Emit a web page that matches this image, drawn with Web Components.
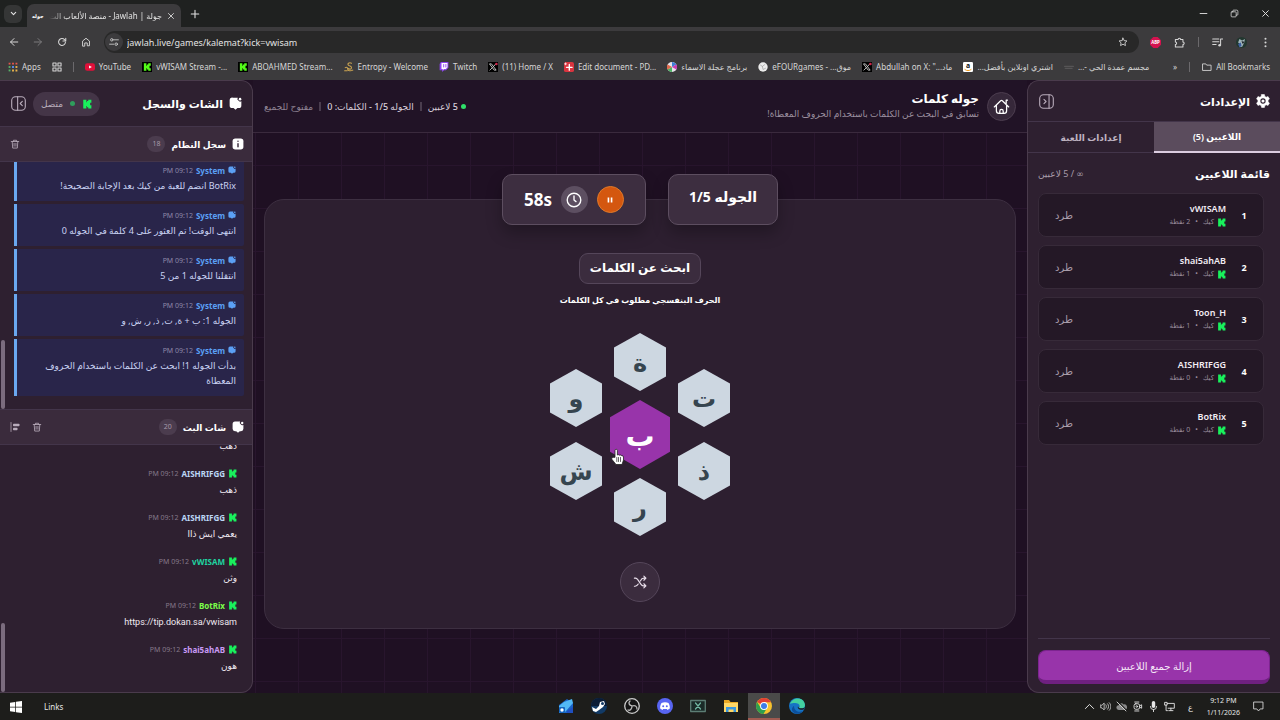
<!DOCTYPE html>
<html lang="ar">
<head>
<meta charset="utf-8">
<title>جولة | Jawlah - منصة الألعاب</title>
<style>
  html, body { height: 100%; margin: 0; }
  body { font-family: "Noto Sans", "DejaVu Sans", sans-serif; font-size: 10px; background: #1f1023; color: #fff; overflow: hidden; }
</style>
</head>
<body>
<desktop-view></desktop-view>
<script>
const ICONS = {
  kick: ['16', '<path fill="#19f05c" d="M2 1h5v4h1V3h2V1h5v5h-2v2l0 0v2h2v5h-5v-2H8v-2H7v4H2z"/>'],
  kickbox: ['16', '<path fill="#000" d="M0 0h16v16H0z"/><path fill="#53fc18" d="M3 2h4v4h1V4h2V2h4v4h-2v2l0 0v2h2v4h-4v-2H8v-2H7v4H3z"/>'],
  chevdown: ['16', '<path d="M3 5.500l5 5 5-5" stroke-width="2.600"/>'],
  close: ['16', '<path d="M3 3l10 10M13 3L3 13" stroke-width="1.7"/>'],
  plus: ['16', '<path d="M8 2v12M2 8h12" stroke-width="1.7"/>'],
  min: ['16', '<path d="M2 8h12" stroke-width="1.6"/>'],
  restore: ['16', '<rect x="2" y="5" width="9" height="9" rx="1.5"/><path d="M5 5V3.500A1.500 1.500 0 0 1 6.500 2H12a2 2 0 0 1 2 2v5.500A1.500 1.500 0 0 1 12.500 11H11"/>'],
  back: ['16', '<path d="M14 8H2.500M8 2.500L2.500 8 8 13.500" stroke-width="1.6"/>'],
  fwd: ['16', '<path d="M2 8h11.500M8 2.500L13.500 8 8 13.500" stroke-width="1.6"/>'],
  reload: ['16', '<path d="M13.500 8.500A5.500 5.500 0 1 1 12 4.200L13.500 6" stroke-width="1.700"/><path d="M14 2v4.500H9.500" stroke-width="1.700"/>'],
  home: ['16', '<path d="M2.500 14V6.500L8 2l5.500 4.500V14H10V9.500H6V14z" stroke-width="1.500"/>'],
  tune: ['16', '<circle cx="4.500" cy="4.500" r="2"/><path d="M8.500 4.500H15M1 11.500h6.500"/><circle cx="11.500" cy="11.500" r="2"/>'],
  star: ['16', '<path d="M8 1.800l1.900 4 4.400.5-3.200 3 .8 4.400L8 11.500l-3.900 2.200.8-4.400-3.200-3 4.400-.5z" stroke-width="1.400"/>'],
  abp: ['20', '<path fill="#d3124f" d="M6 0h8l6 6v8l-6 6H6l-6-6V6z"/><text x="10" y="13" font-size="8" font-weight="700" fill="#fff" text-anchor="middle" font-family="Noto Sans">ABP</text>'],
  puzzle: ['16', '<path d="M2 3.500h4a1.800 1.800 0 0 1 3.600 0H13v3.800a1.800 1.800 0 0 1 0 3.600v3.600H2V11a1.800 1.800 0 0 0 0-3.600z" stroke-width="1.500"/>'],
  music: ['16', '<path d="M1 3h9M1 7h9M1 11h5" stroke-width="1.500"/><path d="M12.500 12V3H16" stroke-width="1.500"/><circle cx="11" cy="12" r="1.800" fill="currentColor" stroke="none"/>'],
  avatar: ['16', '<circle cx="8" cy="8" r="8" fill="#22372f"/><path fill="#9fb3b8" d="M5 3l4 2 4-2-1 5-3 6-4 1 1-5-3-2z"/><path fill="#3c5fa0" d="M3 10l4-2 1 5-3 2z"/><path fill="#10151a" d="M8 6l4 1-2 3z"/>'],
  dots: ['16', '<g fill="currentColor" stroke="none"><circle cx="8" cy="2.500" r="1.500"/><circle cx="8" cy="8" r="1.500"/><circle cx="8" cy="13.500" r="1.500"/></g>'],
  apps: ['16', '<g stroke="none"><path fill="#e8564a" d="M1 1h3v3H1zM6.500 1h3v3h-3zM12 1h3v3h-3z"/><path fill="#58b368" d="M1 6.500h3v3H1z"/><path fill="#5b8def" d="M6.500 6.500h3v3h-3z"/><path fill="#e9b44c" d="M12 6.500h3v3h-3z"/><path fill="#58b368" d="M1 12h3v3H1z"/><path fill="#e9b44c" d="M6.500 12h3v3h-3zM12 12h3v3h-3z"/></g>'],
  grid: ['16', '<path d="M1.500 1.500h5v5h-5zM9.500 1.500h5v5h-5zM1.500 9.500h5v5h-5zM9.500 9.500h5v5h-5z" stroke-width="1.700"/>'],
  youtube: ['16', '<rect y="2" width="16" height="12" rx="3.500" fill="#e0103a"/><path fill="#fff" d="M6.500 5.500L11 8l-4.500 2.500z"/>'],
  entropy: ['16', '<path stroke="#c9a352" stroke-width="1.700" d="M12 2C8 0 5 3 7 5s5 1 5 4-4 3-6 1M2 9c3-2 4 1 4 3s5 3 8 1M1 14h4"/>'],
  twitch: ['16', '<path fill="#8d44f0" d="M3 0L1 3v10h4v3l3-3h3l4-4V0z"/><path fill="#fff" d="M4 1.500h9.500v7L11 11H8l-2 2v-2H4z"/><path stroke="#8d44f0" stroke-width="1.500" d="M7.500 4v4M11 4v4"/>'],
  x: ['16', '<path fill="#000" d="M0 0h16v16H0z"/><path stroke="#ddd" stroke-width="1.300" d="M3 3h2.500l7.500 10h-2.500zM12.500 3L9 7M7 9l-4 4"/><circle cx="13.500" cy="3" r="2" fill="#d0244a"/>'],
  pdf: ['16', '<rect width="16" height="16" rx="3" fill="#d9343f"/><path stroke="#fff" stroke-width="2.200" d="M8.500 4v9M4 8.500h9"/><path stroke="#fff" stroke-width="1.200" d="M2.500 1.500v3M1 3h3"/>'],
  wheel: ['16', '<circle cx="8" cy="8" r="8" fill="#e7e3ea"/><path fill="#3f7fd6" d="M8 8V0a8 8 0 0 1 7 4z"/><path fill="#c63cb4" d="M8 8l7-4a8 8 0 0 1 0 8z"/><path fill="#4bb562" d="M8 8v8a8 8 0 0 1-7-4z"/><path fill="#e06a4c" d="M8 8L1 12a8 8 0 0 1 0-8z"/>'],
  globe: ['16', '<circle cx="8" cy="8" r="7.500" fill="#ececec"/><path stroke="#999" stroke-width="1" d="M4 5l3 2 4-3M7 7l1 5 4-2"/>'],
  amazon: ['16', '<rect width="16" height="16" rx="2" fill="#fff"/><text x="8" y="10" font-size="11" font-weight="700" fill="#111" text-anchor="middle" font-family="Noto Sans">a</text><path stroke="#f09a1a" stroke-width="1.500" d="M3 12c3 2.500 7 2.500 10 0"/>'],
  faint: ['16', '<path stroke="#565456" stroke-width="2" d="M1 7h14M2 10h11"/>'],
  folder: ['16', '<path d="M1.500 3h4.500l1.500 2h7v8.500h-13z" stroke-width="1.400"/>'],
  panelL: ['20', '<rect x="2" y="2" width="16" height="16" rx="4.500"/><path d="M9 2v16M14.500 7.500L12 10l2.500 2.500"/>'],
  panelR: ['20', '<rect x="2" y="2" width="16" height="16" rx="4.500"/><path d="M13 2v16M7 7.500L9.500 10 7 12.500"/>'],
  bubble: ['20', '<path fill="currentColor" stroke="none" d="M6 1h7.500a3.200 3.200 0 0 0 1 4.500 3.200 3.200 0 0 0 4.500 1V13a4 4 0 0 1-4 4h-2l-3 2.500L7 17H5a4 4 0 0 1-4-4V5.500A4.500 4.500 0 0 1 6 1z"/><circle cx="17" cy="3.300" r="2" fill="currentColor" stroke="none"/>'],
  info: ['20', '<rect x="1" y="1" width="18" height="18" rx="4.500" fill="currentColor" stroke="none"/><path stroke="#3a2b3c" stroke-width="2.400" d="M10 9.500v5M10 5.300v.2"/>'],
  trash: ['16', '<path d="M2 4h12M5.500 4V2h5v2M3.500 4l.8 10.500h7.400L12.500 4M6.500 7v4.500M9.500 7v4.500"/>'],
  align: ['20', '<path d="M2 1v18" stroke-width="1.500"/><rect x="6" y="3.500" width="13" height="5" rx="1.500" fill="currentColor" stroke="none"/><rect x="6" y="11.500" width="9" height="5" rx="1.500" fill="currentColor" stroke="none"/>'],
  gear: ['20', '<path fill="currentColor" stroke="currentColor" stroke-width=".8" d="M8 .8h4l.7 2.700 1.800 1 2.700-.8 2 3.400-2 1.900v2l2 1.900-2 3.400-2.700-.8-1.800 1-.7 2.700H8l-.7-2.700-1.800-1-2.700.8-2-3.400 2-1.900V9L.8 7.100l2-3.400 2.700.8 1.800-1z"/><circle cx="10" cy="10" r="3" stroke="#2e2030" stroke-width="1.600"/>'],
  house: ['20', '<path d="M1.500 10.500L9 3.200a1.500 1.500 0 0 1 2 0l7.500 7.300M4 8.500V15a3 3 0 0 0 3 3h6a3 3 0 0 0 3-3V8.500M15.500 6.500V2.500H17M8 18v-2.500a2 2 0 0 1 4 0V18" stroke-width="1.500"/>'],
  clock: ['20', '<circle cx="10" cy="10" r="8.500" stroke-width="1.700"/><path d="M10 5v5l2.500 2" stroke-width="1.700"/>'],
  pause: ['16', '<path d="M5.500 4v8M10.500 4v8" stroke-width="2.600" stroke-linecap="butt"/>'],
  shuffle: ['20', '<path d="M2 4.500h1.500c5 0 6 11 11.500 11h3M2 16h1c2 0 3.500-1.200 4.500-3M10.500 8.500c1-2 2.500-4 5-4H18M15.500 1.500l3 3-3 3M15.500 12.500l3 3-3 3" stroke-width="1.600"/>'],
  win: ['16', '<path fill="#fff" d="M0 2.200l7-1v6.300H0zM8 1l8-1v7.500H8zM0 8.500h7v6.300l-7-1zM8 8.500h8V16l-8-1z"/>'],
  mailbox: ['16', '<path fill="#1a63c9" d="M1 7l8-6 6 4v10H1z"/><path fill="#52b8f5" d="M1 8l5-4 8-3 1 4-7 8-2 2H1z"/><path fill="#1f4fc0" d="M9 13l6-4v6H9z"/><rect x="1" y="9" width="6" height="6" rx="1" fill="#1565c0"/><circle cx="4" cy="12" r="1.700" fill="#fff"/>'],
  steam: ['16', '<circle cx="8" cy="8" r="8" fill="#123a66"/><path fill="#0a1c36" d="M0 8a8 8 0 0 1 16 0z"/><path fill="#fff" d="M1 9l4 2 3-3 1-4 4-1 1 3-2 3-4 3-3 2-3-1z"/><circle cx="11.500" cy="5.500" r="1.500" fill="#123a66"/>'],
  obs: ['16', '<circle cx="8" cy="8" r="7.300" stroke="#ccc" fill="#151515"/><path stroke="#bbb" d="M8 8c-3-1-4-3-2-5M8 8c3-1 5 0 5 3M8 8c0 3-2 5-4 4" stroke-width="1.300"/>'],
  discord: ['16', '<circle cx="8" cy="8" r="8" fill="#5865f2"/><path fill="#fff" d="M4.500 5c2-1 5-1 7 0 1.200 2 1.500 4 1.300 5.500L10.500 12l-.7-1H6.200l-.7 1-2.300-1.500C3 9 3.300 7 4.500 5z"/><circle cx="6.200" cy="8.200" r="1" fill="#5865f2"/><circle cx="9.800" cy="8.200" r="1" fill="#5865f2"/>'],
  xbox: ['16', '<rect x=".7" y="2.500" width="14.600" height="11" stroke="#5c7d74" fill="#1a2a27"/><path stroke="#72b8a3" stroke-width="1.200" d="M5.500 5l5 6M10.500 5l-5 6"/>'],
  explorer: ['16', '<path fill="#e9a825" d="M1 2h5l1.500 2H15v3H1z"/><path fill="#ffd766" d="M1 5h14v9H1z"/><path fill="#3b98dd" d="M3 9h10v5h-2.500v-2.500h-5V14H3z"/>'],
  chrome: ['16', '<circle cx="8" cy="8" r="8" fill="#f7c32e"/><path fill="#e24034" d="M8 8L1.100 4A8 8 0 0 1 15 4.200H8z"/><path fill="#2da04f" d="M1.100 4A8 8 0 0 0 7.500 16L11 10 8 8 4.500 9.500z"/><circle cx="8" cy="8" r="3.900" fill="#fff"/><circle cx="8" cy="8" r="3" fill="#3f7de8"/>'],
  edge: ['16', '<circle cx="8" cy="8" r="8" fill="#1673c4"/><path fill="#43d0a0" d="M1 6c2-7 14-8 15 1 0 3-3 4-6 3 2-3-1-5-4-5-2 0-4 0-5 1z"/><path fill="#0c4f9c" d="M5 8c0 5 5 7 9 5-2 3-7 4-10 1-2-2-1-5 1-6z"/><path fill="#1d1d1b" d="M9 8.500c-1 2 2 4 5.500 3l1.500-2c-2 1-5 1-6 .5z"/>'],
  caret: ['16', '<path d="M2 11l6-6 6 6" stroke-width="1.400"/>'],
  volume: ['16', '<path d="M1 6v4h2l3 3V3L3 6zM8.500 5.500c1 1.500 1 3.500 0 5M11 4c2 2 2 6 0 8M13.500 2.500c3 3 3 8 0 11" stroke-width="1.100"/>'],
  nocloud: ['16', '<g><path fill="#8a8a8a" stroke="none" d="M4 13a3.500 3.500 0 0 1 0-7 4 4 0 0 1 7-1 3.500 3.500 0 0 1 2 8z"/><path stroke="#1d1d1b" d="M3 1l13 13" stroke-width="1.500"/><path stroke="#ddd" d="M1.500 1.500l13 13" stroke-width="1.300"/></g>'],
  cam: ['16', '<rect x="3" y="4" width="8" height="8" rx="2.500"/><path d="M11 7l3-1.500v5L11 9M4 1.500h6M4 14.500h6"/><circle cx="7" cy="8" r="1.200"/>'],
  mic: ['16', '<rect x="5.500" y="0" width="5" height="10" rx="2.500" fill="currentColor" stroke="none"/><path d="M3.500 8a4.500 4.500 0 0 0 9 0M8 12.500V16"/>'],
  net: ['16', '<path d="M5 3.500h10v7H6M10 10.500v3M7 14h6M1.500 2h3v4h-3zM3 6v8h2"/>'],
  note: ['16', '<path d="M1.500 1.500h13v10h-4L8 14.500l-2.500-3h-4z" stroke-width="1.200"/>'],
  hand: ['16', '<path fill="#fff" stroke="#222" stroke-width=".8" d="M5 8V1.500a1.200 1.200 0 0 1 2.400 0V6l1-.3 1.200.5 1.200-.2 1 .7 1.200.2.500 1V11l-1.500 4.500H6L2 10.500l-.5-1.500 1.500-.5z"/><path stroke="#222" stroke-width=".7" d="M8.500 8.500v4M10.500 8.500v4M6.800 8.500v4"/>']
};

const define = (name, css, render) => customElements.define(name, class extends HTMLElement {
  connectedCallback() {
    if (this.shadowRoot) return;
    const t = document.createElement('template');
    t.innerHTML = `<style>*,*::before,*::after{box-sizing:border-box}button,input{font:inherit;color:inherit;background:none;border:0;margin:0;padding:0}a{color:inherit;text-decoration:none}h1,h2,p{margin:0;font-weight:inherit}${css}</style>${render(this)}`;
    this.attachShadow({ mode: 'open' }).append(t.content.cloneNode(true));
  }
});
const at = (el, n) => el.getAttribute(n) || '';

define('ui-icon', `:host{display:inline-flex;flex:none;width:10px;height:10px}svg{width:100%;height:100%;display:block}`, el => {
  const [box, body] = ICONS[at(el, 'name')];
  return `<svg viewBox="0 0 ${box} ${box}" fill="none" stroke-width="1.300" stroke-linecap="round" stroke-linejoin="round" aria-hidden="true"><g stroke="${/fill="#/.test(body) && !/currentColor/.test(body) ? 'none' : 'currentColor'}">${body}</g></svg>`;
});

/* ---------- browser chrome ---------- */
define('tab-strip', `
  :host{display:flex;align-items:center;height:27px;background:#1f2120;color:#e3e3e3;padding:0 10px 0 4px}
  .search{width:18px;height:18px;border-radius:6px;background:#353636;display:grid;place-items:center}
  .search ui-icon{width:7px;height:7px}
  .tab{display:flex;align-items:center;gap:5px;align-self:flex-end;height:23px;width:154px;margin-left:5px;padding:0 6px 0 5px;background:#3c3b3d;border-radius:7px 7px 0 0}
  .fav{font-size:5px;font-weight:700;width:12px;color:#fff}
  .title{flex:1;font-size:8px;direction:rtl;white-space:nowrap;overflow:hidden;mask-image:linear-gradient(to right,transparent,#000 16px);-webkit-mask-image:linear-gradient(to right,transparent,#000 16px)}
  .tab button{display:flex}.tab ui-icon{width:8px;height:8px}
  .new{margin-left:9px;display:flex}
  .win{margin-left:auto;display:flex;gap:22px}
  .win button{display:flex}.win ui-icon{width:9px;height:9px}`,
  () => `<button class="search" aria-label="Search tabs"><ui-icon name="chevdown"></ui-icon></button>
  <div class="tab"><span class="fav">جوله</span><span class="title">جولة | Jawlah - منصة الألعاب الت</span><button aria-label="Close"><ui-icon name="close"></ui-icon></button></div>
  <button class="new" aria-label="New tab"><ui-icon name="plus"></ui-icon></button>
  <div class="win"><button aria-label="Minimize"><ui-icon name="min"></ui-icon></button><button aria-label="Restore"><ui-icon name="restore"></ui-icon></button><button aria-label="Close window"><ui-icon name="close"></ui-icon></button></div>`);

define('tool-bar', `
  :host{display:flex;align-items:center;height:30px;background:#3c3b3d;color:#d6d6d6;padding:0 9px}
  button{display:flex}
  .nav{display:flex;gap:14px;margin-right:13px}.nav .off{color:#7b7a7c}
  .url{flex:1;display:flex;align-items:center;gap:4px;height:22px;border-radius:11px;background:#282828;padding:0 11px 0 1px}
  .site{width:18px;height:18px;border-radius:9px;background:#3c3b3d;display:grid;place-items:center}
  input{flex:1;font-size:9px;color:#e3e3e3;outline:0}
  .ext{display:flex;align-items:center;gap:13px;margin-left:11px}
  .ext ui-icon{width:11px;height:11px}
  i{width:1px;height:10px;background:#6b696c}`,
  () => `<div class="nav"><button aria-label="Back"><ui-icon name="back"></ui-icon></button><button class="off" aria-label="Forward"><ui-icon name="fwd"></ui-icon></button><button aria-label="Reload"><ui-icon name="reload"></ui-icon></button><button aria-label="Home"><ui-icon name="home"></ui-icon></button></div>
  <div class="url"><span class="site"><ui-icon name="tune"></ui-icon></span><input aria-label="Address" value="jawlah.live/games/kalemat?kick=vwisam"><button aria-label="Bookmark"><ui-icon name="star"></ui-icon></button></div>
  <div class="ext"><button aria-label="Adblock"><ui-icon name="abp"></ui-icon></button><button aria-label="Extensions"><ui-icon name="puzzle"></ui-icon></button><i></i><button aria-label="Media"><ui-icon name="music"></ui-icon></button><button aria-label="Profile"><ui-icon name="avatar"></ui-icon></button><button aria-label="Menu"><ui-icon name="dots"></ui-icon></button></div>`);

define('book-mark', `:host{display:block;flex:none}a{display:flex;align-items:center;gap:4px;white-space:nowrap}`,
  el => `<a href="#"><ui-icon name="${at(el, 'icon')}"></ui-icon><span dir="${at(el, 'dir') || 'ltr'}"><slot></slot></span></a>`);

define('bookmarks-bar', `
  :host{display:flex;align-items:center;gap:11px;height:23px;background:#3c3b3d;color:#d6d6d6;font-size:8px;padding:0 10px 4px 8px}
  i{width:1px;height:10px;background:#6b696c}
  .end{margin-left:auto;display:flex;align-items:center;gap:12px}`,
  () => `<book-mark icon="apps">Apps</book-mark><ui-icon name="grid"></ui-icon><i></i>
  <book-mark icon="youtube">YouTube</book-mark><book-mark icon="kickbox">vWISAM Stream -...</book-mark><book-mark icon="kickbox">ABOAHMED Stream...</book-mark>
  <book-mark icon="entropy">Entropy - Welcome</book-mark><book-mark icon="twitch">Twitch</book-mark><book-mark icon="x">(11) Home / X</book-mark><book-mark icon="pdf">Edit document - PD...</book-mark>
  <book-mark icon="wheel">برنامج عجلة الاسماء</book-mark><book-mark icon="globe">eFOURgames - موق...&rlm;</book-mark><book-mark icon="x">Abdullah on X: "ماد...&rlm;</book-mark>
  <book-mark icon="amazon">...اشتري اونلاين بأفضل</book-mark><book-mark icon="faint">...- مجسم عمدة الحي</book-mark>
  <div class="end"><span>»</span><i></i><book-mark icon="folder">All Bookmarks</book-mark></div>`);

/* ---------- settings panel ---------- */
define('player-row', `
  :host{display:flex;align-items:center;height:44px;border:1px solid #372a39;border-radius:8px;background:#241826;padding:0 14px}
  b{width:10px;text-align:center;font-size:9px}
  .who{flex:1;margin-right:13px;display:grid;row-gap:1px}
  .name{font-size:9px;line-height:13px;font-weight:600;color:#f3edf4}
  .meta{display:flex;align-items:center;gap:3px;font-size:7px;line-height:12px;color:#9a8d9c}
  .meta ui-icon{width:9px;height:9px}
  button{font-size:10px;color:#a99dab;padding:0 2px}`,
  el => `<b>${at(el, 'rank')}</b><div class="who"><span class="name">${at(el, 'name')}</span><span class="meta"><ui-icon name="kick"></ui-icon><span>كيك</span><span>&nbsp;•&nbsp;</span><span>${at(el, 'points')} نقطة</span></span></div><button>طرد</button>`);

define('settings-panel', `
  :host{display:flex;flex-direction:column;background:#2e2030;border:1px solid #4a3b4c;border-right:0;border-radius:12px 0 0 12px;overflow:hidden}
  header{display:flex;align-items:center;gap:6px;height:41px;padding:0 10px;border-bottom:1px solid #43354a}
  header ui-icon{width:14px;height:14px}
  header h2{font-size:11px;font-weight:700;flex:1}
  header button{display:flex;color:#b9acbb}header button ui-icon{width:17px;height:17px}
  nav{display:grid;grid-template-columns:1fr 1fr;height:31px;border-bottom:1px solid #43354a}
  nav button{font-size:9px;font-weight:600;color:#bfb3c1}
  nav .on{background:#5b4c5d;color:#fff;border-bottom:2px solid #dccde0;margin-bottom:-1px}
  .cap{display:flex;justify-content:space-between;align-items:center;height:40px;padding:0 10px}
  .cap h2{font-size:11px;font-weight:700}.cap span{font-size:9px;color:#a99dab}
  .list{flex:1;min-height:0;overflow:hidden;display:flex;flex-direction:column;gap:8px;padding:0 16px 0 10px}
  player-row{flex:none}
  footer{margin:0 10px;border-top:1px solid #43354a;padding:11px 0 8px}
  footer button{display:block;width:100%;height:34px;border-radius:8px;background:#9834aa;border:1px solid #7d2490;border-bottom:4px solid #6f2080;font-size:10px;font-weight:500;color:#f6e8f8}`,
  () => `<header><ui-icon name="gear"></ui-icon><h2>الإعدادات</h2><button aria-label="طي"><ui-icon name="panelR"></ui-icon></button></header>
  <nav><button class="on">اللاعبين (5)</button><button>إعدادات اللعبة</button></nav>
  <div class="cap"><h2>قائمة اللاعبين</h2><span>∞ / 5 لاعبين</span></div>
  <div class="list"><player-row rank="1" name="vWISAM" points="2"></player-row><player-row rank="2" name="shai5ahAB" points="1"></player-row><player-row rank="3" name="Toon_H" points="1"></player-row><player-row rank="4" name="AISHRIFGG" points="0"></player-row><player-row rank="5" name="BotRix" points="0"></player-row></div>
  <footer><button>إزالة جميع اللاعبين</button></footer>`);

/* ---------- game ---------- */
define('hex-tile', `
  :host{display:block;width:52px;height:58px}
  :host([key]){width:60px;height:69px}
  button{width:100%;height:100%;background:#cdd7e1;color:#36454f;clip-path:polygon(50% 0,100% 25%,100% 75%,50% 100%,0 75%,0 25%);font-size:24px;line-height:30px;font-weight:700}
  :host([key]) button{background:#9834aa;color:#fff;font-size:29px}`,
  () => `<button><slot></slot></button>`);

define('game-header', `
  :host{display:flex;align-items:center;gap:8px;height:53px;padding:0 11px;border-bottom:1px solid #3a2a3d;background:#211326}
  .home{width:29px;height:29px;border-radius:50%;background:#36283a;border:1px solid #4c3d4f;display:grid;place-items:center}
  .home ui-icon{width:17px;height:17px}
  .t{flex:1}h1{font-size:12px;line-height:16px;font-weight:700}
  p{font-size:9px;line-height:14px;color:#9b8f9f}
  .s{display:flex;align-items:center;gap:6px;font-size:9px;font-weight:500;color:#d9cfdb}
  .s u{width:5px;height:5px;border-radius:50%;background:#2fe06a;margin-left:-3px}
  .s i{width:2px;height:9px;background:#4a3d4e}.s span:last-child{color:#8f8393}`,
  () => `<button class="home" aria-label="الرئيسية"><ui-icon name="house"></ui-icon></button><div class="t"><h1>جوله كلمات</h1><p>تسابق في البحث عن الكلمات باستخدام الحروف المعطاة!</p></div>
  <div class="s"><u></u><span>5 لاعبين</span><i></i><span>الجوله 1/5 - الكلمات: 0</span><i></i><span>مفتوح للجميع</span></div>`);

define('game-stage', `
  :host{display:flex;flex-direction:column;background-color:#1f1023;background-image:repeating-linear-gradient(to right,transparent 0 42px,#28152d 42px 43px),repeating-linear-gradient(to bottom,transparent 0 42px,#28152d 42px 43px);background-position:3px 0}
  .body{flex:1;display:flex;flex-direction:column;align-items:center;padding:41px 11px 64px}
  .pills{display:flex;gap:22px;margin-bottom:-26px;z-index:1}
  .pill{height:51px;border:1px solid #5d4e60;border-radius:10px;background:#3d2e40;display:flex;align-items:center;box-shadow:0 8px 16px #0004;font-weight:700}
  .round{padding:0 20px 6px;font-size:14px}
  .time{gap:9px;padding:0 21px;font-size:17px}
  .time button,.time .ck{width:27px;height:27px;border-radius:50%;display:grid;place-items:center}
  .time button{background:#d4570f;border:1px solid #e07a2a}.time .ck{background:#5d4f61}
  .time .ck ui-icon{width:16px;height:16px}
  .board{align-self:stretch;flex:1;border:1px solid #3d2f41;border-radius:20px;background:#2d1f30;display:flex;flex-direction:column;align-items:center;padding-top:53px}
  .find{height:31px;border:1px solid #55465a;border-radius:9px;background:#3b2c3e;padding:0 10px;font-size:12px;line-height:27px;font-weight:700}
  .hint{margin-top:8px;font-size:8px;line-height:16px;font-weight:700}
  .hive{position:relative;display:flex;align-items:center;gap:8px;margin-top:25px}
  .col{display:flex;flex-direction:column;align-items:center;gap:15px}.mid{gap:9px}
  .cursor{position:absolute;left:60px;top:115px;width:16px;height:18px}
  .mix{width:40px;height:40px;margin-top:26px;border-radius:50%;border:1px solid #55465a;background:#3b2c3e;display:grid;place-items:center;color:#e9dfeb}
  .mix ui-icon{width:14px;height:14px}`,
  () => `<game-header></game-header><div class="body"><div class="pills"><div class="pill round">الجوله 1/5</div><div class="pill time"><button aria-label="إيقاف مؤقت"><ui-icon name="pause"></ui-icon></button><span class="ck"><ui-icon name="clock"></ui-icon></span><span>58s</span></div></div>
  <div class="board"><h2 class="find">ابحث عن الكلمات</h2><p class="hint">الحرف البنفسجي مطلوب في كل الكلمات</p>
  <div class="hive"><div class="col"><hex-tile>ت</hex-tile><hex-tile>ذ</hex-tile></div><div class="col mid"><hex-tile>ة</hex-tile><hex-tile key>ب</hex-tile><hex-tile>ر</hex-tile></div><div class="col"><hex-tile>و</hex-tile><hex-tile>ش</hex-tile></div><ui-icon class="cursor" name="hand"></ui-icon></div>
  <button class="mix" aria-label="خلط"><ui-icon name="shuffle"></ui-icon></button></div></div>`);

/* ---------- chat panel ---------- */
define('log-entry', `
  :host{display:block;flex:none;background:#29254a;border-left:3px solid #6aa8f0;padding:4px 8px 8px;border-radius:0 2px 2px 0}
  div{display:flex;align-items:center;gap:3px;height:14px;font-size:8px}
  ui-icon,b{color:#5ba0f5}ui-icon{width:8px;height:8px}time{font-size:7px;color:#8d87a8}
  p{padding-top:1px;font-size:9px;line-height:15px;color:#c9d3f3}`,
  () => `<div><ui-icon name="bubble"></ui-icon><b>System</b><time>09:12 PM</time></div><p><slot></slot></p>`);

define('chat-entry', `
  :host{display:block;flex:none;padding:0 7px}
  div{display:flex;align-items:center;gap:3px;height:16px;font-size:8px}
  ui-icon{width:9px;height:9px}time{font-size:7px;color:#86798a}
  p{font-family:Roboto,"DejaVu Sans",sans-serif;font-size:9px;line-height:18px;color:#f0e9f1}`,
  el => `${at(el, 'user') && `<div><ui-icon name="kick"></ui-icon><b style="color:${at(el, 'color')}">${at(el, 'user')}</b><time>09:12 PM</time></div>`}<p><slot></slot></p>`);

define('panel-section', `
  :host{flex:1 1 0;min-height:0;display:flex;flex-direction:column}
  header{flex:none;display:flex;align-items:center;gap:6px;height:36px;padding:0 8px 0 10px;background:#3a2b3c;border-top:1px solid #43354a;border-bottom:1px solid #43354a}
  header>ui-icon{width:12px;height:12px}h2{font-size:9px;font-weight:700}
  .n{min-width:18px;height:16px;border-radius:8px;background:#4b3c4e;color:#a79ba9;font-size:7px;line-height:16px;text-align:center;padding:0 4px}
  .sp{flex:1}
  .list{position:relative;flex:1;min-height:0;overflow:hidden;display:flex;flex-direction:column;justify-content:flex-end;gap:var(--gap);padding:0 8px var(--end) 14px}
  .thumb{position:absolute;left:1px;bottom:0;width:4px;height:28%;border-radius:2px;background:#7b6c7e}`,
  el => `<header><ui-icon name="${at(el, 'icon')}"></ui-icon><h2>${at(el, 'label')}</h2><span class="n">${at(el, 'count')}</span><span class="sp"></span><slot name="actions"></slot></header><div class="list"><slot></slot><span class="thumb"></span></div>`);

define('chat-panel', `
  :host{display:flex;flex-direction:column;background:#2e2030;border:1px solid #4a3b4c;border-left:0;border-radius:0 12px 12px 0;overflow:hidden}
  .top{flex:none;display:flex;align-items:center;gap:6px;height:45px;padding:0 10px}
  .top>ui-icon{width:13px;height:13px}.top h2{font-size:11px;font-weight:700;flex:1}
  .st{display:flex;align-items:center;gap:7px;height:24px;padding:0 8px;border-radius:12px;background:#443547;font-size:9px;color:#b9adbb}
  .st u{width:5px;height:5px;border-radius:50%;background:#2f9e5c}
  .st+button{display:flex;color:#b9acbb}.st+button ui-icon{width:17px;height:17px}
  .log{--gap:3px;--end:13px}.chat{--gap:10px;--end:17px}
  .act{display:flex;color:#b9acbb}.act+.act{margin-right:6px}`,
  () => `<div class="top"><ui-icon name="bubble"></ui-icon><h2>الشات والسجل</h2><span class="st"><ui-icon name="kick"></ui-icon><u></u><span>متصل</span></span><button aria-label="طي"><ui-icon name="panelL"></ui-icon></button></div>
  <panel-section class="log" icon="info" label="سجل النظام" count="18"><button slot="actions" class="act" aria-label="مسح السجل"><ui-icon name="trash"></ui-icon></button>
  <log-entry>BotRix انضم للعبة من كيك بعد الإجابة الصحيحة!</log-entry><log-entry>انتهى الوقت! تم العثور على 4 كلمة في الجوله 0</log-entry><log-entry>انتقلنا للجوله 1 من 5</log-entry><log-entry>الجوله 1: ب + ة, ت, ذ, ر, ش, و</log-entry><log-entry>بدأت الجوله 1! ابحث عن الكلمات باستخدام الحروف المعطاة</log-entry></panel-section>
  <panel-section class="chat" icon="bubble" label="شات البث" count="20"><button slot="actions" class="act" aria-label="مسح الشات"><ui-icon name="trash"></ui-icon></button><button slot="actions" class="act" aria-label="محاذاة"><ui-icon name="align"></ui-icon></button>
  <chat-entry>ذهب</chat-entry><chat-entry user="AISHRIFGG" color="#bcd7f5">ذهب</chat-entry><chat-entry user="AISHRIFGG" color="#bcd7f5">يعمي ايش ذاا</chat-entry><chat-entry user="vWISAM" color="#1fd3a0">وثن</chat-entry><chat-entry user="BotRix" color="#7cff4a">https://tip.dokan.sa/vwisam</chat-entry><chat-entry user="shai5ahAB" color="#c99af5">هون</chat-entry></panel-section>`);

/* ---------- taskbar ---------- */
define('task-bar', `
  :host{display:grid;grid-template-columns:1fr auto 1fr;align-items:center;height:27px;background:#1d1d1b;color:#e6e6e6;font-size:8px}
  .l,.r,.m{display:flex;align-items:center}
  .l{gap:13px;padding-left:10px}.l ui-icon{width:12px;height:12px}
  .m button{width:32px;height:27px;display:grid;place-items:center;border-bottom:2px solid transparent}
  .m{gap:1px;padding-left:83px}.m ui-icon{width:16px;height:16px}.m .on{background:#4a4a49;border-bottom-color:#a05a50}
  .l{gap:22px}
  .r{justify-content:flex-end;gap:5px;padding-right:16px}
  .r ui-icon{width:11px;height:11px}
  .clock{font-size:7px;line-height:12px;text-align:center;margin:0 8px 0 9px}.lang{margin-left:8px}`,
  () => `<div class="l"><ui-icon name="win"></ui-icon><span>Links</span></div>
  <div class="m">${['mailbox', 'steam', 'obs', 'discord', 'xbox', 'explorer', 'chrome', 'edge'].map(n => `<button aria-label="${n}"${n === 'chrome' ? ' class="on"' : ''}><ui-icon name="${n}"></ui-icon></button>`).join('')}</div>
  <div class="r">${['caret', 'volume', 'nocloud', 'cam', 'mic', 'net'].map(n => `<ui-icon name="${n}"></ui-icon>`).join('')}<span class="lang">ع</span><time class="clock">9:12 PM<br>1/11/2026</time><ui-icon name="note"></ui-icon></div>`);

define('desktop-view', `
  :host{display:flex;flex-direction:column;height:100vh}
  .app{flex:1;min-height:0;display:flex;background:#1f1023;direction:rtl}
  tab-strip,tool-bar,bookmarks-bar,task-bar{flex:none}
  settings-panel,chat-panel{flex:none;width:253px}game-stage{flex:1;min-width:0}`,
  () => `<tab-strip></tab-strip><tool-bar></tool-bar><bookmarks-bar></bookmarks-bar>
  <main class="app" dir="rtl"><settings-panel></settings-panel><game-stage></game-stage><chat-panel></chat-panel></main><task-bar></task-bar>`);
</script>
</body>
</html>
